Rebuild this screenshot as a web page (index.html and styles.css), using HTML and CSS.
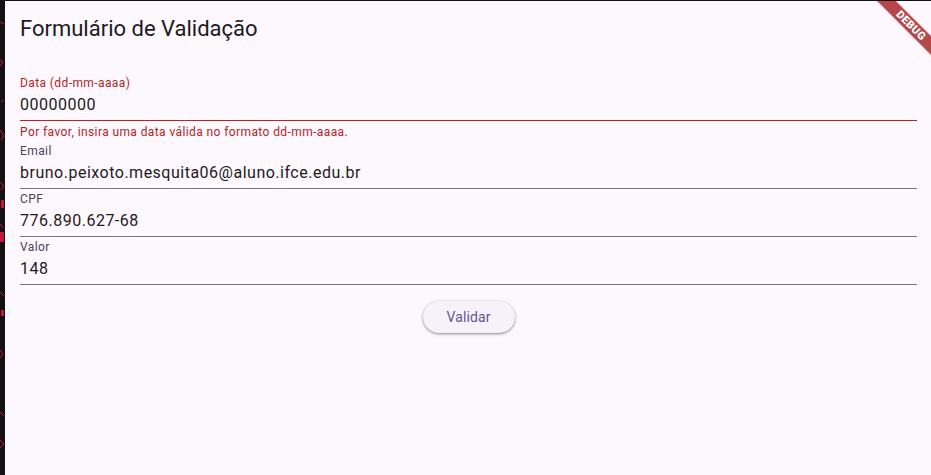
FILE: index.html
```html
<!DOCTYPE html>
<html lang="pt">
<head>
<meta charset="utf-8">
<title>Formulário de Validação</title>
<link rel="stylesheet" href="styles.css">
</head>
<body>
<div class="screen">
  <div class="edge">
    <svg width="5" height="475" viewBox="0 0 5 475">
      <g stroke="#c0183c" stroke-width="1" fill="none">
        <path d="M0 22 L4 24"/>
        <path d="M0 60 L3 62 L0 66"/>
        <path d="M1 102 L4 100"/>
        <path d="M0 130 L4 136 L1 140"/>
        <path d="M0 182 L4 186 L1 190"/>
        <path d="M0 224 L3 228"/>
        <path d="M0 292 L4 296"/>
        <path d="M0 350 L3 354 L0 358"/>
        <path d="M0 412 L4 416"/>
        <path d="M0 440 L4 444 L0 448"/>
      </g>
      <g fill="#c0183c">
        <rect x="1" y="200" width="3" height="8"/>
        <rect x="0" y="232" width="4" height="10"/>
        <rect x="1" y="310" width="3" height="6"/>
      </g>
    </svg>
  </div>
  <main class="app">
    <h1 class="title">Formulário de Validação</h1>
    <form class="form">
      <div class="field field-error">
        <span class="label">Data (dd-mm-aaaa)</span>
        <span class="value">00000000</span>
      </div>
      <div class="error-text">Por favor, insira uma data válida no formato dd-mm-aaaa.</div>
      <div class="field">
        <span class="label">Email</span>
        <span class="value">bruno.peixoto.mesquita06@aluno.ifce.edu.br</span>
      </div>
      <div class="field">
        <span class="label">CPF</span>
        <span class="value">776.890.627-68</span>
      </div>
      <div class="field">
        <span class="label">Valor</span>
        <span class="value">148</span>
      </div>
      <div class="actions">
        <button type="button" class="btn">Validar</button>
      </div>
    </form>
    <div class="debug-banner">DEBUG</div>
  </main>
</div>
</body>
</html>
```
FILE: styles.css
```css
html, body {
  margin: 0;
  padding: 0;
  height: 100%;
}
body {
  background: #121212;
  font-family: Roboto, "Noto Sans", sans-serif;
  overflow: hidden;
}
.screen {
  display: flex;
  height: 475px;
  width: 931px;
}
.edge {
  width: 4px;
  flex: none;
  background: #141014;
  overflow: hidden;
}
.app {
  position: relative;
  flex: 1;
  margin-top: 1px;
  margin-left: 1px;
  background: #fdf7fe;
  padding: 0 14px 0 15px;
  overflow: hidden;
}
.title {
  margin: 14px 0 0 0;
  font-size: 22px;
  line-height: 28px;
  font-weight: 400;
  color: #1d1b20;
}
.form {
  display: flex;
  flex-direction: column;
  margin-top: 30px;
}
.field {
  display: flex;
  flex-direction: column;
  height: 48px;
  box-sizing: border-box;
  padding-top: 2px;
  border-bottom: 1px solid #79747e;
}
.label {
  font-size: 12px;
  line-height: 16px;
  color: #49454f;
  letter-spacing: 0.4px;
}
.value {
  margin-top: 2px;
  font-size: 16px;
  line-height: 24px;
  color: #1d1b20;
  letter-spacing: 0.5px;
}
.field-error {
  border-bottom-color: #b3261e;
}
.field-error .label {
  color: #b3261e;
}
.error-text {
  padding-top: 3px;
  height: 20px;
  box-sizing: border-box;
  font-size: 12px;
  line-height: 16px;
  color: #b3261e;
  letter-spacing: 0.4px;
}
.actions {
  display: flex;
  justify-content: center;
  margin-top: 16px;
}
.btn {
  width: 92px;
  height: 32px;
  border: none;
  border-radius: 16px;
  background: #f7f2fa;
  color: #65558f;
  font-family: Roboto, sans-serif;
  font-size: 14px;
  font-weight: 400;
  letter-spacing: 0.1px;
  box-shadow: 0 1px 2px rgba(0,0,0,0.3), 0 1px 3px 1px rgba(0,0,0,0.12);
  cursor: pointer;
}
.debug-banner {
  position: absolute;
  top: 18px;
  right: -40px;
  width: 120px;
  height: 13px;
  transform: rotate(45deg);
  background: #b5474a;
  color: #fff;
  font-size: 11px;
  font-weight: 900;
  line-height: 13px;
  text-align: center;
  letter-spacing: 0.3px;
  box-shadow: 0 0 3px rgba(0,0,0,0.2);
}
```
